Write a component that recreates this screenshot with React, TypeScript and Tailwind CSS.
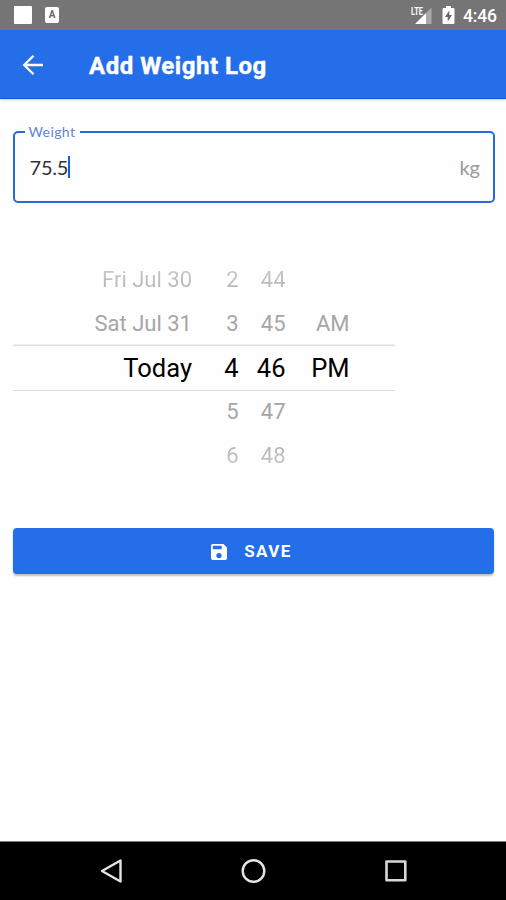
import React from "react";

type Row = {
  date: string;
  hour: string;
  minute: string;
  period: string;
  tone: string;
};

const rows: Row[] = [
  { date: "Fri Jul 30", hour: "2", minute: "44", period: "", tone: "text-[22px] bg-linear-to-b from-[#d4d4d4] to-[#a9a9a9] bg-clip-text text-transparent" },
  { date: "Sat Jul 31", hour: "3", minute: "45", period: "AM", tone: "text-[22px] text-[#a6a6a6]" },
  { date: "Today", hour: "4", minute: "46", period: "PM", tone: "text-[25.500px] text-black" },
  { date: "", hour: "5", minute: "47", period: "", tone: "text-[22px] text-[#a6a6a6]" },
  { date: "", hour: "6", minute: "48", period: "", tone: "text-[22px] bg-linear-to-b from-[#a9a9a9] to-[#d4d4d4] bg-clip-text text-transparent" },
];

function StatusBar() {
  return (
    <div className="flex h-[30px] items-center bg-[#757575] pl-[14px] pr-[9px] text-white">
      <div className="size-[18px] rounded-[1px] bg-white" />
      <div className="ml-[13px] flex h-[16px] w-[14px] items-center justify-center rounded-[2px] bg-white text-[10px] font-bold leading-none text-[#666]">
        A
      </div>
      <svg className="ml-auto h-[20px] w-[23px]" viewBox="0 0 23 20">
        <path d="M21.5 2.5V19H16V8Z" fill="#a9a9a9" />
        <path d="M16 8V19H5Z" fill="#fff" />
        <text x="1" y="9.5" fontSize="10" fontWeight="700" textLength="12" lengthAdjust="spacingAndGlyphs" fill="#fff">
          LTE
        </text>
      </svg>
      <svg className="ml-[9px] h-[20px] w-[13px]" viewBox="0 0 13 20">
        <path d="M4 1h5v2h2.2q1.3 0 1.3 1.3v13.4q0 1.3-1.3 1.3H1.8Q.5 19 .5 17.7V4.3Q.5 3 1.8 3H4Z" fill="#fff" />
        <path d="M7.3 5.5 3 12h2.7v4.5L10 10H7.3Z" fill="#666" />
      </svg>
      <span className="ml-[8px] mt-[2px] w-[34px] whitespace-nowrap text-[17.500px] font-medium leading-[30px] tracking-[-0.200px]">4:46</span>
    </div>
  );
}

function Header() {
  return (
    <header className="flex h-[69px] items-center border-b border-[#1558d6] bg-[#246fe9] pl-[22px] text-white shadow-[0_1px_2px_rgba(0,0,0,0.2)]">
      <svg className="mt-px h-[22px] w-[22px]" viewBox="0 0 22 22" fill="none" stroke="#fff" strokeWidth="2.3">
        <path d="M11.5 1.8 2.2 11l9.300 9.200M2.200 11H21" />
      </svg>
      <h1 className="ml-[45px] mt-[4px] text-[24px] font-bold leading-none tracking-[0.520px] [-webkit-text-stroke:0.4px_white]">Add Weight Log</h1>
    </header>
  );
}

function WeightField() {
  return (
    <fieldset className="ml-[12.500px] mr-[11px] mt-[24px] h-[80px] rounded-[5px] border-[2.500px] border-[#286bd8] px-[10px] font-[Lato,sans-serif]">
      <legend className="px-[5px] pl-[4px] text-[14px] leading-[18px] tracking-[0.400px] text-[#5e84e0]">Weight</legend>
      <div className="flex h-[52px] items-center px-[5px]">
        <span className="text-[20px] tracking-[-0.200px] text-[#333]">75.5</span>
        <span className="h-[22px] w-[2px] bg-[#1d5fd0]" />
        <span className="ml-auto mr-[-2px] text-[20px] text-[#999]">kg</span>
      </div>
    </fieldset>
  );
}

function TimePicker() {
  return (
    <div className="ml-[13px] mt-[55px] w-[382px]">
      {rows.map((row) => (
        <div
          key={row.hour}
          className={`grid h-[44px] grid-cols-[179px_46.500px_47px_64px] items-center text-right leading-[44px] ${
            row.hour === "4" ? "shadow-[0_-1.500px_0_#e0e0e0,0_1px_0_#dedede]" : ""
          }`}
        >
          <span className={row.tone}>{row.date}</span>
          <span className={row.tone}>{row.hour}</span>
          <span className={row.tone}>{row.minute}</span>
          <span className={row.tone}>{row.period}</span>
        </div>
      ))}
    </div>
  );
}

function SaveButton() {
  return (
    <button className="mx-[12.500px] mt-[50px] flex h-[46px] items-center justify-center rounded-[4px] bg-[#246fe9] pr-[3px] pt-px text-white shadow-[0_2px_2px_rgba(0,0,0,0.25)]">
      <svg className="h-[16px] w-[16px]" viewBox="3 3 18 18" fill="#fff">
        <path d="M17 3H5a2 2 0 0 0-2 2v14a2 2 0 0 0 2 2h14c1.1 0 2-.9 2-2V7l-4-4zm-5 16a3 3 0 1 1 0-6 3 3 0 0 1 0 6zm3-10H5V5h10v4z" />
      </svg>
      <span className="ml-[17px] text-[17px] font-bold tracking-[1.400px]">SAVE</span>
    </button>
  );
}

function NavBar() {
  return (
    <nav className="mt-auto flex h-[59px] items-center border-t border-[#777] bg-black pl-[99px]">
      <svg className="h-[26px] w-[26px]" viewBox="0 0 26 26" fill="none" stroke="#e4e4e4" strokeWidth="2.4" strokeLinejoin="round">
        <path d="M21.5 2.5v21L3 13Z" />
      </svg>
      <svg className="ml-[115px] h-[26px] w-[26px]" viewBox="0 0 26 26" fill="none" stroke="#e4e4e4" strokeWidth="2.4">
        <circle cx="13.5" cy="13" r="10.8" />
      </svg>
      <svg className="ml-[117px] h-[26px] w-[26px]" viewBox="0 0 26 26" fill="none" stroke="#d8d8d8" strokeWidth="2.6" strokeLinejoin="round">
        <rect x="3.5" y="3.5" width="18.8" height="18.8" />
      </svg>
    </nav>
  );
}

export default function App() {
  return (
    <div className="flex h-[900px] w-[506px] flex-col overflow-hidden bg-[#fefefe] font-[Roboto,sans-serif]">
      <StatusBar />
      <Header />
      <WeightField />
      <TimePicker />
      <SaveButton />
      <NavBar />
    </div>
  );
}
